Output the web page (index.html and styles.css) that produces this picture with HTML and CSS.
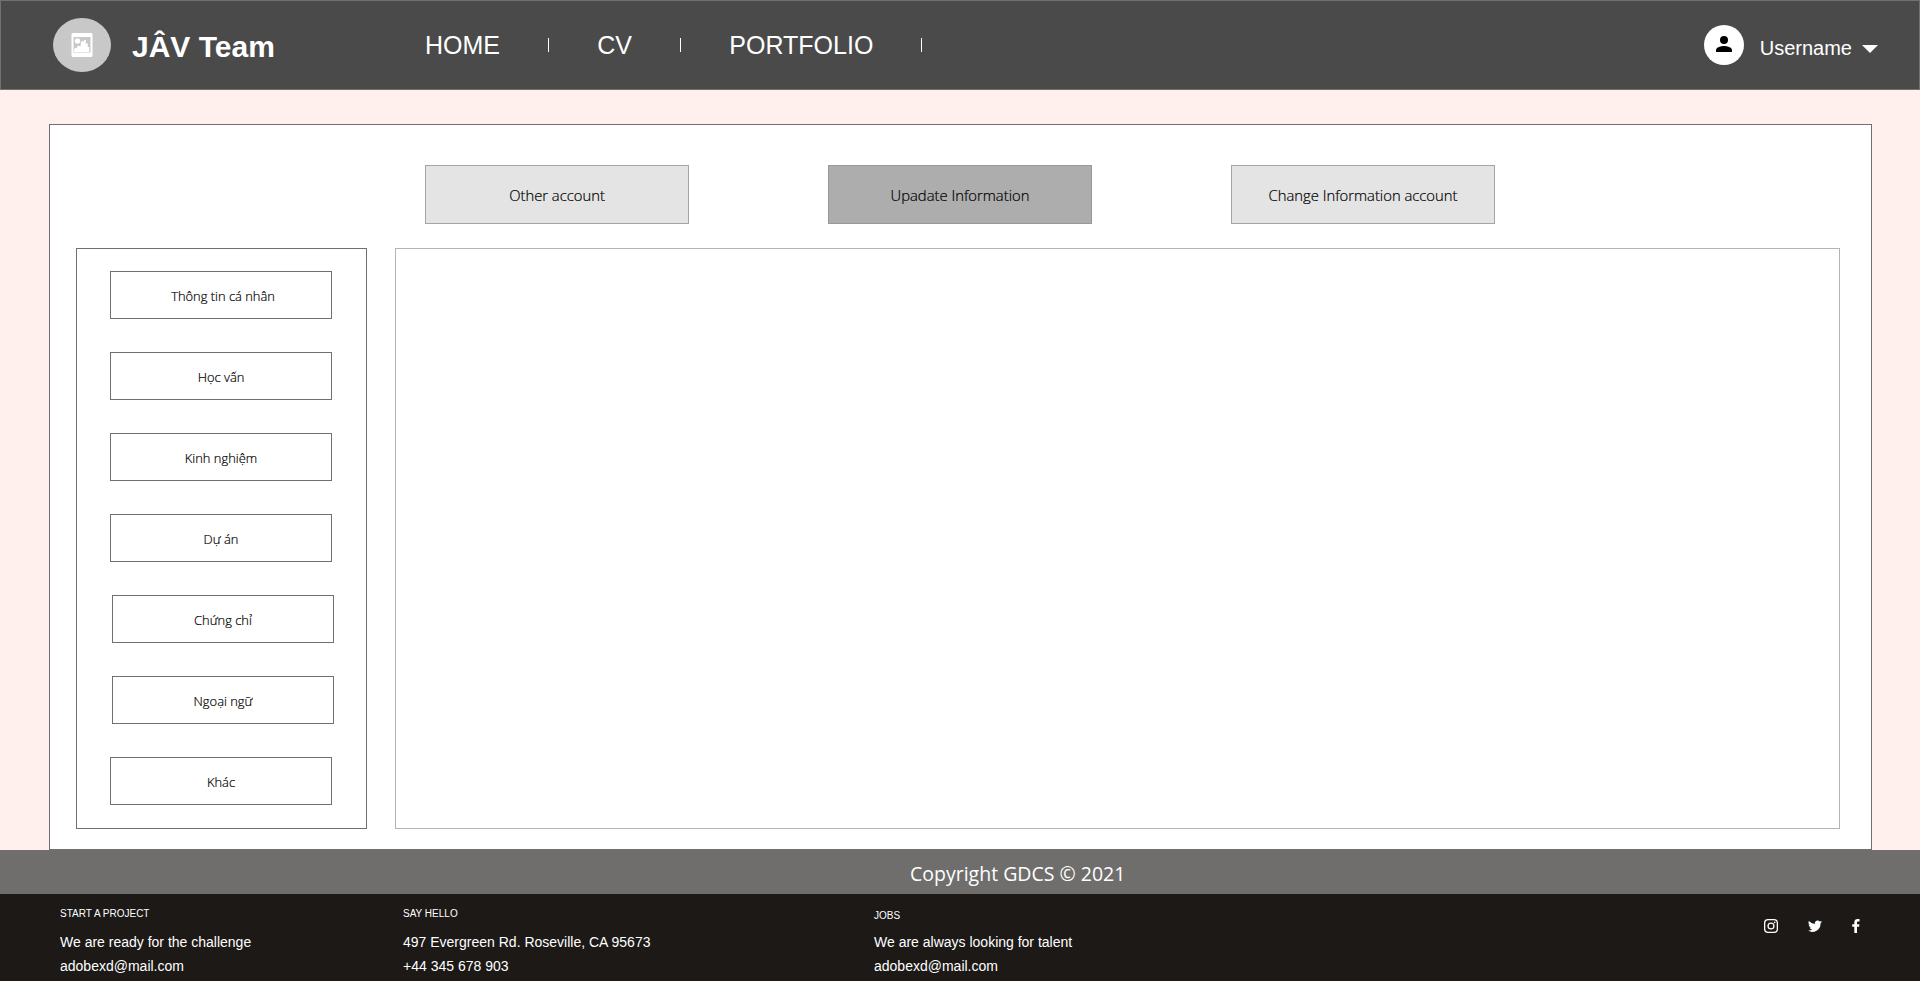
FILE: index.html
```html
<!DOCTYPE html>
<html lang="vi">
<head>
<meta charset="utf-8">
<title>JÂV Team</title>
<link rel="stylesheet" href="styles.css">
</head>
<body>
<header class="header">
  <a class="brand">
    <svg class="brand-logo" viewBox="0 0 58 54" width="58" height="54">
      <ellipse cx="29" cy="27" rx="29" ry="27" fill="#c8c8c8"/>
      <rect x="18.5" y="15" width="21" height="24" rx="1.5" fill="#fff"/>
      <path d="M20.500 19h17v15.500h-17z" fill="#c8c8c8"/>
      <circle cx="24.500" cy="23" r="2.700" fill="#fff"/>
      <path d="M21 34v-2.500l1-1.500h1.500l1.200-2h3v-3l1.200-2h1.300v1.200l1.200-2.200h1.400v3.500h2v3.500h1.400v5z" fill="#fff"/>
    </svg>
    <span class="brand-name">JÂV Team</span>
  </a>
  <nav class="nav">
    <a class="nav-link">HOME</a><i class="nav-sep"></i>
    <a class="nav-link">CV</a><i class="nav-sep"></i>
    <a class="nav-link">PORTFOLIO</a><i class="nav-sep"></i>
  </nav>
  <div class="user">
    <svg viewBox="0 0 40 40" width="40" height="40">
      <circle cx="20" cy="20" r="20" fill="#fff"/>
      <circle cx="20" cy="15" r="4" fill="#000"/>
      <path d="M12 27v-2c0-2.700 5.300-4 8-4s8 1.300 8 4v2z" fill="#000"/>
    </svg>
    <span class="user-name">Username</span>
    <svg class="caret" viewBox="0 0 16 8" width="16" height="8"><path d="M0 0h16l-8 8z" fill="#fff"/></svg>
  </div>
</header>
<main class="page">
  <section class="panel">
    <div class="tabs">
      <button class="tab tab-other">Other account</button>
      <button class="tab tab-active">Upadate Information</button>
      <button class="tab tab-change">Change Information account</button>
    </div>
    <div class="columns">
      <aside class="sidebar">
        <button class="item item-personal">Thông tin cá nhân</button>
        <button class="item">Học vấn</button>
        <button class="item">Kinh nghiệm</button>
        <button class="item">Dự án</button>
        <button class="item item-shifted">Chứng chỉ</button>
        <button class="item item-shifted">Ngoại ngữ</button>
        <button class="item">Khác</button>
      </aside>
      <div class="content"></div>
    </div>
  </section>
</main>
<div class="copyright"><span>Copyright GDCS © 2021</span></div>
<footer class="footer">
  <div class="col col-start">
    <h2>START A PROJECT</h2>
    <p>We are ready for the challenge</p>
    <p>adobexd@mail.com</p>
  </div>
  <div class="col col-hello">
    <h2>SAY HELLO</h2>
    <p>497 Evergreen Rd. Roseville, CA 95673</p>
    <p>+44 345 678 903</p>
  </div>
  <div class="col col-jobs">
    <h2>JOBS</h2>
    <p>We are always looking for talent</p>
    <p>adobexd@mail.com</p>
  </div>
  <div class="social">
    <svg viewBox="0 0 14 14" width="14" height="14" fill="none" stroke="#fff" stroke-width="1.300">
      <rect x=".65" y=".65" width="12.700" height="12.700" rx="3.400"/>
      <circle cx="7" cy="7" r="2.950"/>
      <circle cx="10.700" cy="3.300" r=".85" fill="#fff" stroke="none"/>
    </svg>
    <svg viewBox="0 2 24 19.500" width="14" height="12"><path fill="#fff" d="M24 4.600a10 10 0 0 1-2.800.8 5 5 0 0 0 2.200-2.700 10 10 0 0 1-3.100 1.200 4.900 4.900 0 0 0-8.400 4.500A14 14 0 0 1 1.700 3.200a4.900 4.900 0 0 0 1.500 6.600 5 5 0 0 1-2.200-.6 4.900 4.900 0 0 0 3.900 4.900 5 5 0 0 1-2.200.1 4.900 4.900 0 0 0 4.600 3.400A10 10 0 0 1 0 19.500a14 14 0 0 0 21.500-12.400A10 10 0 0 0 24 4.600z"/></svg>
    <svg viewBox="0 0 8 14" width="8" height="14"><path fill="#fff" d="M2.300 14V7.800H.2V5.300h2.100V3.400C2.300 1.200 3.600 0 5.600 0c.9 0 1.700.1 1.900.1v2.300H6.200c-1 0-1.200.5-1.200 1.200v1.700h2.400L7.100 7.800H5V14z"/></svg>
  </div>
</footer>
</body>
</html>
```
FILE: styles.css
```css
* { box-sizing: border-box; }

body {
  margin: 0;
  height: 981px;
  overflow: hidden;
  display: flex;
  flex-direction: column;
  background: #fff0ee;
  font-family: "Liberation Sans", Arial, sans-serif;
}

svg { display: block; flex: none; }

.header {
  height: 90px;
  flex: none;
  display: flex;
  align-items: center;
  padding: 0 41px 0 52px;
  border: 1px solid #707070;
  background: #4a4a4a;
  color: #fff;
}

.brand { width: 372px; display: flex; align-items: center; gap: 21px; }
.brand-name { padding-top: 3px; font-size: 30px; font-weight: 700; line-height: 36px; }

.nav { display: flex; align-items: center; }
.nav-link { font-size: 25px; line-height: 30px; }
.nav-sep { width: 1px; height: 14px; margin: 0 48.3px 0 48px; background: #fff; }

.user { margin-left: auto; display: flex; align-items: center; }
.user-name { margin-left: 16px; padding-top: 5px; font-size: 20px; line-height: 24px; }
.caret { margin: 8px 0 0 10px; }

.page { height: 760px; flex: none; padding: 34px 48px 0 49px; }

.panel {
  height: 726px;
  padding: 40px 31px 0 26px;
  border: 1px solid #707070;
  background: #fff;
}

.tabs { display: flex; gap: 139px; padding-left: 349px; }

.tab, .item {
  display: block;
  padding: 0;
  font-family: "Open Sans", "Noto Sans", sans-serif;
  font-weight: 300;
  -webkit-text-stroke: 0.2px #000;
  color: #000;
  text-align: center;
  white-space: nowrap;
}

.tab {
  width: 264px;
  height: 59px;
  padding-top: 1px;
  border: 1px solid #a5a5a5;
  background: #e4e4e4;
  font-size: 14.8px;
}
.tab-active { border-color: #989898; background: #adadad; }

.columns { display: flex; gap: 28px; margin-top: 24px; }

.sidebar {
  width: 291px;
  height: 581px;
  display: flex;
  flex-direction: column;
  gap: 33px;
  padding: 22px 0 0 33px;
  border: 1px solid #707070;
}

.item {
  width: 222px;
  height: 48px;
  flex: none;
  padding-top: 2px;
  border: 1px solid #707070;
  background: #fff;
  font-size: 12.9px;
}
.item-personal { padding-left: 4px; }
.item-shifted { margin-left: 2px; }

.content { flex: 1; border: 1px solid #b3b3b3; }

.copyright {
  height: 44px;
  flex: none;
  padding: 4px 0 0 910px;
  background: #6f6e6c;
  color: #fff;
  font-family: "Open Sans", "Noto Sans", sans-serif;
  font-size: 19.5px;
  line-height: 39px;
}

.footer {
  flex: 1;
  display: flex;
  padding: 13px 60px 0;
  background: #1c1917;
  color: #fff;
}

.col h2 { margin: 0 0 10px; font-size: 10px; font-weight: 400; line-height: 13px; }
.col p { margin: 0; font-size: 14px; line-height: 24px; white-space: nowrap; }
.col-start { width: 343px; }
.col-hello { width: 471px; }
.col-jobs h2 { padding-top: 2px; margin-bottom: 8px; }

.social { margin: 7px 0 0 auto; height: 24px; display: flex; align-items: center; gap: 30px; }
```
